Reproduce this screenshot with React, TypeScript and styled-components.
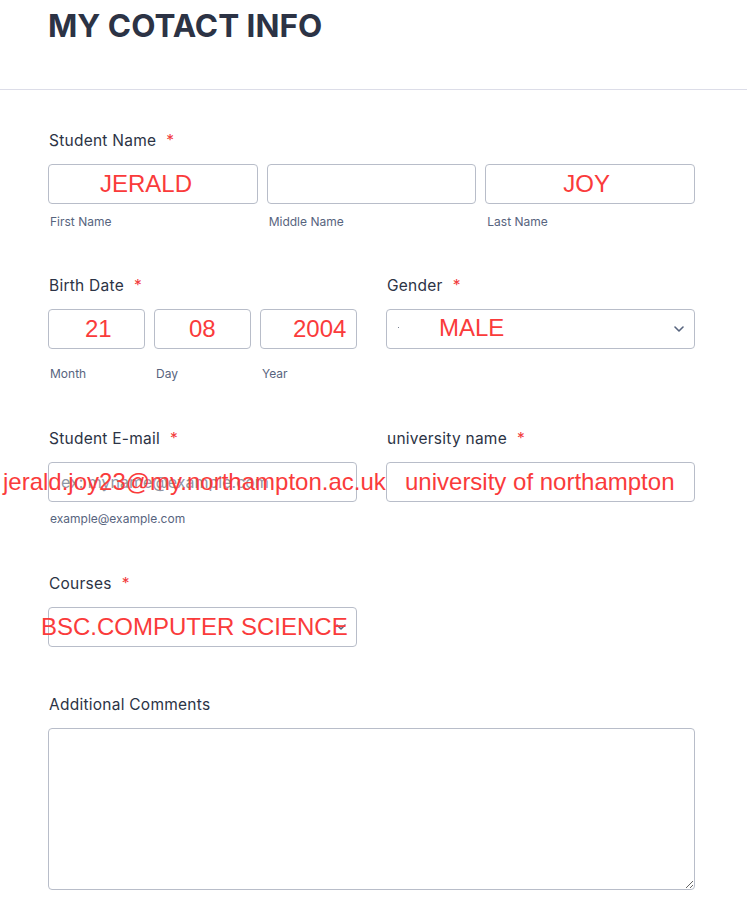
import React from "react";
import styled, { createGlobalStyle } from "styled-components";

const GlobalStyle = createGlobalStyle`
  html, body {
    margin: 0;
    padding: 0;
    background: #ffffff;
  }
  body {
    font-family: Inter, "Noto Sans", sans-serif;
    color: #2c3345;
  }
`;

const Page = styled.div`
  width: 747px;
  min-height: 911px;
  background: #fff;
  overflow: hidden;
`;

const Header = styled.header`
  padding: 8px 48px 45px;
  border-bottom: 1px solid #dcdde8;
  h1 {
    margin: 0;
    font-size: 31.5px;
    line-height: 36px;
    font-weight: 700;
    color: #2c3345;
  }
`;

const Form = styled.form`
  width: 647px;
  padding: 40px 0 20px 48px;
`;

const Row = styled.div<{ $cols?: number; $top?: number }>`
  display: grid;
  grid-template-columns: repeat(${(p) => p.$cols ?? 1}, 1fr);
  column-gap: 29px;
  margin-top: ${(p) => p.$top ?? 0}px;
`;

const Field = styled.div`
  display: flex;
  flex-direction: column;
`;

const Label = styled.label<{ $gap?: number }>`
  font-size: 15.5px;
  line-height: 20px;
  font-weight: 400;
  letter-spacing: 0.25px;
  color: #2c3345;
  padding-left: 1px;
  margin-bottom: ${(p) => p.$gap ?? 13}px;
  .req {
    color: #f23a3c;
    margin-left: 10px;
  }
`;

const Trio = styled.div`
  display: grid;
  grid-template-columns: repeat(3, 1fr);
  column-gap: 9px;
`;

const Cell = styled.div`
  display: flex;
  flex-direction: column;
`;

const Box = styled.div<{ $select?: boolean }>`
  position: relative;
  height: 40px;
  box-sizing: border-box;
  border: 1px solid #b8bdc9;
  border-radius: 4px;
  background: #fff;
  display: flex;
  align-items: center;
  justify-content: ${(p) => (p.$select ? "space-between" : "flex-start")};
  padding: 0 10px 0 11px;
`;

const Entry = styled.span<{ $x: number; $dy?: number }>`
  position: absolute;
  left: ${(p) => p.$x}px;
  top: 50%;
  transform: translateY(calc(-50% + ${(p) => p.$dy ?? 0}px));
  font-family: "Liberation Sans", Arial, sans-serif;
  font-size: 24px;
  line-height: normal;
  color: #fa3b3b;
  white-space: nowrap;
  z-index: 2;
`;

const Placeholder = styled.span`
  font-size: 16px;
  color: #8f96a5;
  white-space: nowrap;
  padding-left: 1px;
`;

const Dot = styled.span`
  width: 1px;
  height: 1px;
  background: #7a8294;
  margin-bottom: 3px;
`;

const Chevron = styled.svg`
  width: 10px;
  height: 6px;
  margin-left: auto;
  flex-shrink: 0;
`;

const Sub = styled.span<{ $top?: number }>`
  font-size: 12px;
  line-height: 16px;
  color: #57647e;
  margin-top: ${(p) => p.$top ?? 10}px;
  padding-left: 2px;
`;

const Comments = styled.textarea`
  display: block;
  width: 100%;
  height: 162px;
  box-sizing: border-box;
  border: 1px solid #b8bdc9;
  border-radius: 4px;
  font-family: Inter, sans-serif;
  font-size: 15px;
  outline: none;
  resize: both;
`;

const Req = () => <span className="req">*</span>;

const Arrow = () => (
  <Chevron viewBox="0 0 10 6" fill="none">
    <path d="M1 1l4 4 4-4" stroke="#57647e" strokeWidth="1.6" strokeLinecap="round" strokeLinejoin="round" />
  </Chevron>
);

export default function App() {
  return (
    <Page>
      <GlobalStyle />
      <Header>
        <h1>MY COTACT INFO</h1>
      </Header>

      <Form onSubmit={(e) => e.preventDefault()}>
        <Row $top={1}>
          <Field>
            <Label $gap={13}>
              Student Name
              <Req />
            </Label>
            <Trio>
              <Cell>
                <Box>
                  <Entry $x={51}>JERALD</Entry>
                </Box>
                <Sub>First Name</Sub>
              </Cell>
              <Cell>
                <Box />
                <Sub>Middle Name</Sub>
              </Cell>
              <Cell>
                <Box>
                  <Entry $x={77}>JOY</Entry>
                </Box>
                <Sub>Last Name</Sub>
              </Cell>
            </Trio>
          </Field>
        </Row>

        <Row $cols={2} $top={46}>
          <Field>
            <Label>
              Birth Date
              <Req />
            </Label>
            <Trio>
              <Cell>
                <Box>
                  <Entry $x={36}>21</Entry>
                </Box>
                <Sub $top={17}>Month</Sub>
              </Cell>
              <Cell>
                <Box>
                  <Entry $x={34}>08</Entry>
                </Box>
                <Sub $top={17}>Day</Sub>
              </Cell>
              <Cell>
                <Box>
                  <Entry $x={32}>2004</Entry>
                </Box>
                <Sub $top={17}>Year</Sub>
              </Cell>
            </Trio>
          </Field>
          <Field>
            <Label>
              Gender
              <Req />
            </Label>
            <Box $select>
              <Dot />
              <Entry $x={52} $dy={-1}>MALE</Entry>
              <Arrow />
            </Box>
          </Field>
        </Row>

        <Row $cols={2} $top={47}>
          <Field>
            <Label>
              Student E-mail
              <Req />
            </Label>
            <Box>
              <Placeholder>ex: myname@example.com</Placeholder>
              <Entry $x={-46}>jerald.joy23@my.northampton.ac.uk</Entry>
            </Box>
            <Sub $top={9}>example@example.com</Sub>
          </Field>
          <Field>
            <Label>
              university name
              <Req />
            </Label>
            <Box>
              <Entry $x={18}>university of northampton</Entry>
            </Box>
          </Field>
        </Row>

        <Row $cols={2} $top={47}>
          <Field>
            <Label>
              Courses
              <Req />
            </Label>
            <Box $select>
              <Entry $x={-8}>BSC.COMPUTER SCIENCE</Entry>
              <Arrow />
            </Box>
          </Field>
        </Row>

        <Row $top={48}>
          <Field>
            <Label $gap={13}>Additional Comments</Label>
            <Comments />
          </Field>
        </Row>
      </Form>
    </Page>
  );
}
